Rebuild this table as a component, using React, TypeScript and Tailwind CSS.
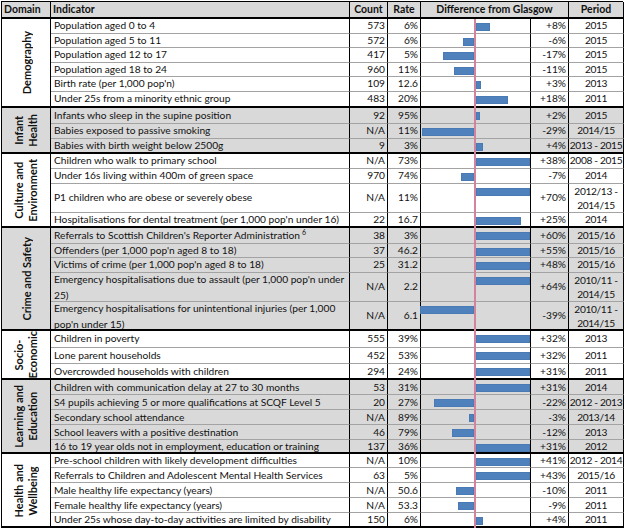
import React from 'react';

type Row = {
  name: React.ReactNode;
  count: string;
  rate: string;
  diff: number;
  period: React.ReactNode;
  h: number;
};

type Section = {
  domain: React.ReactNode;
  span: string;
  grey: boolean;
  rows: Row[];
};

const HEIGHT: Record<number, string> = {
  14: 'h-[14px]',
  15: 'h-[15px]',
  16: 'h-[16px]',
  17: 'h-[17px]',
  29: 'h-[29px]',
};

const two = (a: string, b: string) => (
  <span className="block text-center leading-[14px]">
    {a}
    <br />
    {b}
  </span>
);

const sections: Section[] = [
  {
    domain: 'Demography',
    span: 'row-span-6',
    grey: false,
    rows: [
      { name: 'Population aged 0 to 4', count: '573', rate: '6%', diff: 8, period: '2015', h: 15 },
      { name: 'Population aged 5 to 11', count: '572', rate: '6%', diff: -6, period: '2015', h: 14 },
      { name: 'Population aged 12 to 17', count: '417', rate: '5%', diff: -17, period: '2015', h: 15 },
      { name: 'Population aged 18 to 24', count: '960', rate: '11%', diff: -11, period: '2015', h: 14 },
      { name: "Birth rate (per 1,000 pop'n)", count: '109', rate: '12.6', diff: 3, period: '2013', h: 15 },
      { name: 'Under 25s from a minority ethnic group', count: '483', rate: '20%', diff: 18, period: '2011', h: 16 },
    ],
  },
  {
    domain: two('Infant', 'Health'),
    span: 'row-span-3',
    grey: true,
    rows: [
      { name: 'Infants who sleep in the supine position', count: '92', rate: '95%', diff: 2, period: '2015', h: 16 },
      { name: 'Babies exposed to passive smoking', count: 'N/A', rate: '11%', diff: -29, period: '2014/15', h: 15 },
      { name: 'Babies with birth weight below 2500g', count: '9', rate: '3%', diff: 4, period: '2013 - 2015', h: 15 },
    ],
  },
  {
    domain: two('Culture and', 'Environment'),
    span: 'row-span-4',
    grey: false,
    rows: [
      { name: 'Children who walk to primary school', count: 'N/A', rate: '73%', diff: 38, period: '2008 - 2015', h: 15 },
      { name: 'Under 16s living within 400m of green space', count: '970', rate: '74%', diff: -7, period: '2014', h: 15 },
      { name: 'P1 children who are obese or severely obese', count: 'N/A', rate: '11%', diff: 70, period: two('2012/13 -', '2014/15'), h: 29 },
      { name: "Hospitalisations for dental treatment (per 1,000 pop'n under 16)", count: '22', rate: '16.7', diff: 25, period: '2014', h: 15 },
    ],
  },
  {
    domain: 'Crime and Safety',
    span: 'row-span-5',
    grey: true,
    rows: [
      {
        name: (
          <>
            Referrals to Scottish Children's Reporter Administration <sup className="text-[7px] ml-[2px]">6</sup>
          </>
        ),
        count: '38',
        rate: '3%',
        diff: 60,
        period: '2015/16',
        h: 16,
      },
      { name: "Offenders (per 1,000 pop'n aged 8 to 18)", count: '37', rate: '46.2', diff: 55, period: '2015/16', h: 14 },
      { name: "Victims of crime (per 1,000 pop'n aged 8 to 18)", count: '25', rate: '31.2', diff: 48, period: '2015/16', h: 15 },
      {
        name: (
          <span className="block leading-[16px]">
            Emergency hospitalisations due to assault (per 1,000 pop'n under
            <br />
            25)
          </span>
        ),
        count: 'N/A',
        rate: '2.2',
        diff: 64,
        period: two('2010/11 -', '2014/15'),
        h: 29,
      },
      {
        name: (
          <span className="block leading-[16px]">
            Emergency hospitalisations for unintentional injuries (per 1,000
            <br />
            pop'n under 15)
          </span>
        ),
        count: 'N/A',
        rate: '6.1',
        diff: -39,
        period: two('2010/11 -', '2014/15'),
        h: 29,
      },
    ],
  },
  {
    domain: two('Socio-', 'Economic'),
    span: 'row-span-3',
    grey: false,
    rows: [
      { name: 'Children in poverty', count: '555', rate: '39%', diff: 32, period: '2013', h: 17 },
      { name: 'Lone parent households', count: '452', rate: '53%', diff: 32, period: '2011', h: 16 },
      { name: 'Overcrowded households with children', count: '294', rate: '24%', diff: 31, period: '2011', h: 16 },
    ],
  },
  {
    domain: two('Learning and', 'Education'),
    span: 'row-span-5',
    grey: true,
    rows: [
      { name: 'Children with communication delay at 27 to 30 months', count: '53', rate: '31%', diff: 31, period: '2014', h: 15 },
      { name: 'S4 pupils achieving 5 or more qualifications at SCQF Level 5', count: '20', rate: '27%', diff: -22, period: '2012 - 2013', h: 15 },
      { name: 'Secondary school attendance', count: 'N/A', rate: '89%', diff: -3, period: '2013/14', h: 15 },
      { name: 'School leavers with a positive destination', count: '46', rate: '79%', diff: -12, period: '2013', h: 15 },
      { name: '16 to 19 year olds not in employment, education or training', count: '137', rate: '36%', diff: 31, period: '2012', h: 14 },
    ],
  },
  {
    domain: two('Health and', 'Wellbeing'),
    span: 'row-span-5',
    grey: false,
    rows: [
      { name: 'Pre-school children with likely development difficulties', count: 'N/A', rate: '10%', diff: 41, period: '2012 - 2014', h: 14 },
      { name: 'Referrals to Children and Adolescent Mental Health Services', count: '63', rate: '5%', diff: 43, period: '2015/16', h: 15 },
      { name: 'Male healthy life expectancy (years)', count: 'N/A', rate: '50.6', diff: -10, period: '2011', h: 15 },
      { name: 'Female healthy life expectancy (years)', count: 'N/A', rate: '53.3', diff: -9, period: '2011', h: 15 },
      { name: 'Under 25s whose day-to-day activities are limited by disability', count: '150', rate: '6%', diff: 4, period: '2011', h: 15 },
    ],
  },
];

function Bar({ diff }: { diff: number }) {
  // 1.8px per percentage point, clipped at the cell edge
  const w = Math.min(54, Math.abs(diff) * 1.8);
  const left = diff >= 0 ? 55 : 53 - w;
  return (
    <div
      className="absolute top-[4px] h-[8px] bg-[#4f81bd] border border-[#4a7ab3]"
      style={{ left, width: w }}
    />
  );
}

export default function App() {
  return (
    <div className="bg-white w-[624px] h-[529px] pt-px pl-px font-['Lato',sans-serif] text-[10.2px] text-[#111]">
      <div className="grid grid-cols-[49px_299px_38px_33px_110px_38px_55px] w-[622px] border-l border-t border-l-black border-t-black">
        {/* header */}
        <div className="h-[17px] flex items-center px-[2px] font-bold text-[10.5px] bg-[#d9d9d9] border-r border-b-2 border-r-black border-b-black">Domain</div>
        <div className="h-[17px] flex items-center px-[2px] font-bold text-[10.5px] bg-[#d9d9d9] border-r border-b-2 border-r-black border-b-black">Indicator</div>
        <div className="h-[17px] flex items-center justify-center font-bold text-[10.5px] bg-[#d9d9d9] border-r border-b-2 border-r-black border-b-black">Count</div>
        <div className="h-[17px] flex items-center justify-center font-bold text-[10.5px] bg-[#d9d9d9] border-r border-b-2 border-r-black border-b-black">Rate</div>
        <div className="col-span-2 h-[17px] flex items-center justify-center font-bold text-[10.5px] bg-[#d9d9d9] border-r border-b-2 border-r-black border-b-black">Difference from Glasgow</div>
        <div className="h-[17px] flex items-center justify-center font-bold text-[10.5px] bg-[#d9d9d9] border-r border-b-2 border-r-black border-b-black">Period</div>

        {sections.map((s, si) => {
          const bg = s.grey ? 'bg-[#d9d9d9]' : 'bg-white';
          return (
            <React.Fragment key={si}>
              <div className={`${s.span} col-start-1 flex items-center justify-center border-r border-b-2 border-r-black border-b-black ${bg}`}>
                <div className="[writing-mode:vertical-rl] rotate-180 font-bold text-center leading-[13px] text-[11px]">{s.domain}</div>
              </div>
              {s.rows.map((r, ri) => {
                const last = ri === s.rows.length - 1;
                const edge = last ? 'border-b-2 border-b-black' : 'border-b border-b-[#a3a3a3]';
                const base = `${HEIGHT[r.h]} border-r border-r-black ${edge} ${bg}`;
                return (
                  <React.Fragment key={ri}>
                    <div className={`${base} col-start-2 flex items-center px-[3px] whitespace-nowrap`}>{r.name}</div>
                    <div className={`${base} flex items-center justify-end pr-[2px]`}>{r.count}</div>
                    <div className={`${base} flex items-center justify-end pr-[2px]`}>{r.rate}</div>
                    <div className={`${base} relative`}>
                      <Bar diff={r.diff} />
                      <div className={`absolute left-[53px] top-0 w-[2px] bg-[#d4839f] ${last ? 'bottom-[-2px]' : 'bottom-[-1px]'}`} />
                    </div>
                    <div className={`${base} flex items-center justify-end pr-[2px]`}>
                      {r.diff > 0 ? `+${r.diff}%` : `${r.diff}%`}
                    </div>
                    <div className={`${base} flex items-center justify-center whitespace-nowrap tracking-[-0.35px]`}>{r.period}</div>
                  </React.Fragment>
                );
              })}
            </React.Fragment>
          );
        })}
      </div>
    </div>
  );
}
